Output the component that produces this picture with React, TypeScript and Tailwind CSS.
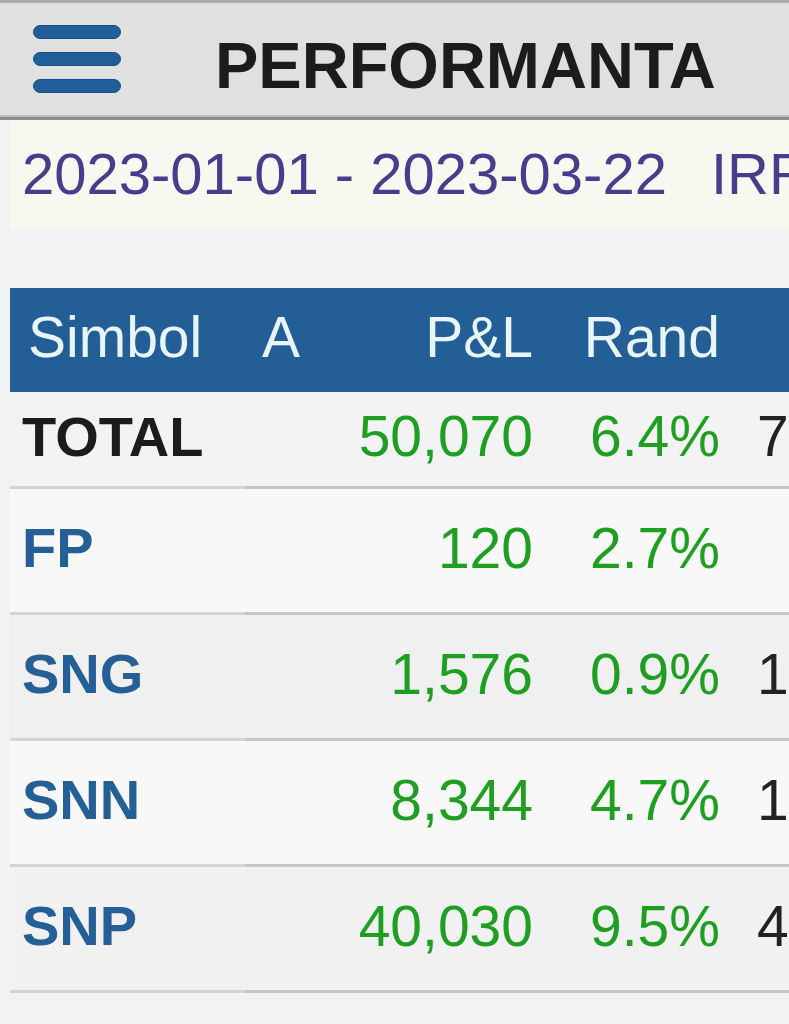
import React from "react";

type Row = {
  sym: string;
  total?: boolean;
  a: string;
  pl: string;
  rand: string;
  val: string;
  bg: string;
};

const rows: Row[] = [
  { sym: "TOTAL", total: true, a: "", pl: "50,070", rand: "6.4%", val: "786,370", bg: "bg-[#f3f3f3]" },
  { sym: "FP", a: "", pl: "120", rand: "2.7%", val: "4,520", bg: "bg-[#f8f8f8]" },
  { sym: "SNG", a: "", pl: "1,576", rand: "0.9%", val: "175,120", bg: "bg-[#f0f0f0]" },
  { sym: "SNN", a: "", pl: "8,344", rand: "4.7%", val: "177,530", bg: "bg-[#f8f8f8]" },
  { sym: "SNP", a: "", pl: "40,030", rand: "9.5%", val: "421,400", bg: "bg-[#f1f1f1]" },
];

export default function App() {
  return (
    <div className="w-full min-h-screen overflow-hidden bg-[#f2f2f2] font-['Liberation_Sans',Arial,sans-serif]">
      {/* Top bar */}
      <div className="w-full border-t-[3px] border-[#acacac] bg-[#e0e0e0]">
        <div className="flex h-[112px] items-center">
          <div className="ml-[33px] flex w-[88px] flex-col gap-[13px]">
            <div className="h-[14px] rounded-full border border-[#1a5185] bg-[#1f5e99]" />
            <div className="h-[14px] rounded-full border border-[#1a5185] bg-[#1f5e99]" />
            <div className="h-[14px] rounded-full border border-[#1a5185] bg-[#1f5e99]" />
          </div>
          <div className="ml-[94px] pt-[13px] text-[65px] font-bold leading-none text-[#1c1c1c]">
            PERFORMANTA
          </div>
        </div>
        <div className="h-[2px] bg-[#bdbdbd]" />
        <div className="h-[3px] bg-[#8e8e8e]" />
      </div>

      {/* Date bar */}
      <div className="ml-[10px] flex h-[108px] items-center overflow-hidden whitespace-nowrap bg-[#f9f8f0] pl-[12px] text-[58px] leading-none text-[#4a3c8d]">
        <span>2023-01-01 - 2023-03-22</span>
        <span className="ml-[44px]">IRR 12.8%</span>
      </div>

      {/* Table */}
      <div className="ml-[10px] mt-[60px] w-[1000px] text-[57px] leading-none">
        <div className="grid h-[104px] grid-cols-[235px_115px_185px_187px_243px] items-center bg-[#235f96] pb-[5px] text-[#e8f5fb]">
          <div className="pl-[18px]">Simbol</div>
          <div className="pl-[17px]">A</div>
          <div className="pr-3 text-right">P&amp;L</div>
          <div className="pr-3 text-right">Rand</div>
          <div className="pr-3 text-right">Cost</div>
        </div>
        {rows.map((r) => (
          <div
            key={r.sym}
            className={`grid grid-cols-[235px_115px_185px_187px_243px] ${r.bg} ${r.total ? "h-[97px]" : "h-[126px]"}`}
          >
            <div
              className={`flex items-center border-b-[3px] border-[#d4d4d4] pb-[5px] pl-3 text-[56px] font-bold ${r.total ? "text-[#1c1c1c]" : "text-[#245f96]"}`}
            >
              {r.sym}
            </div>
            <div className="flex items-center border-b-[3px] border-[#c5c5c5] pb-[5px] pl-[17px]">{r.a}</div>
            <div className="flex items-center justify-end border-b-[3px] border-[#c5c5c5] pb-[5px] pr-3 text-[#1f9f22]">
              {r.pl}
            </div>
            <div className="flex items-center justify-end border-b-[3px] border-[#c5c5c5] pb-[5px] pr-3 text-[#1f9f22]">
              {r.rand}
            </div>
            <div className="flex items-center justify-end border-b-[3px] border-[#c5c5c5] pb-[5px] pr-3 text-[#222222]">
              {r.val}
            </div>
          </div>
        ))}
      </div>
    </div>
  );
}
